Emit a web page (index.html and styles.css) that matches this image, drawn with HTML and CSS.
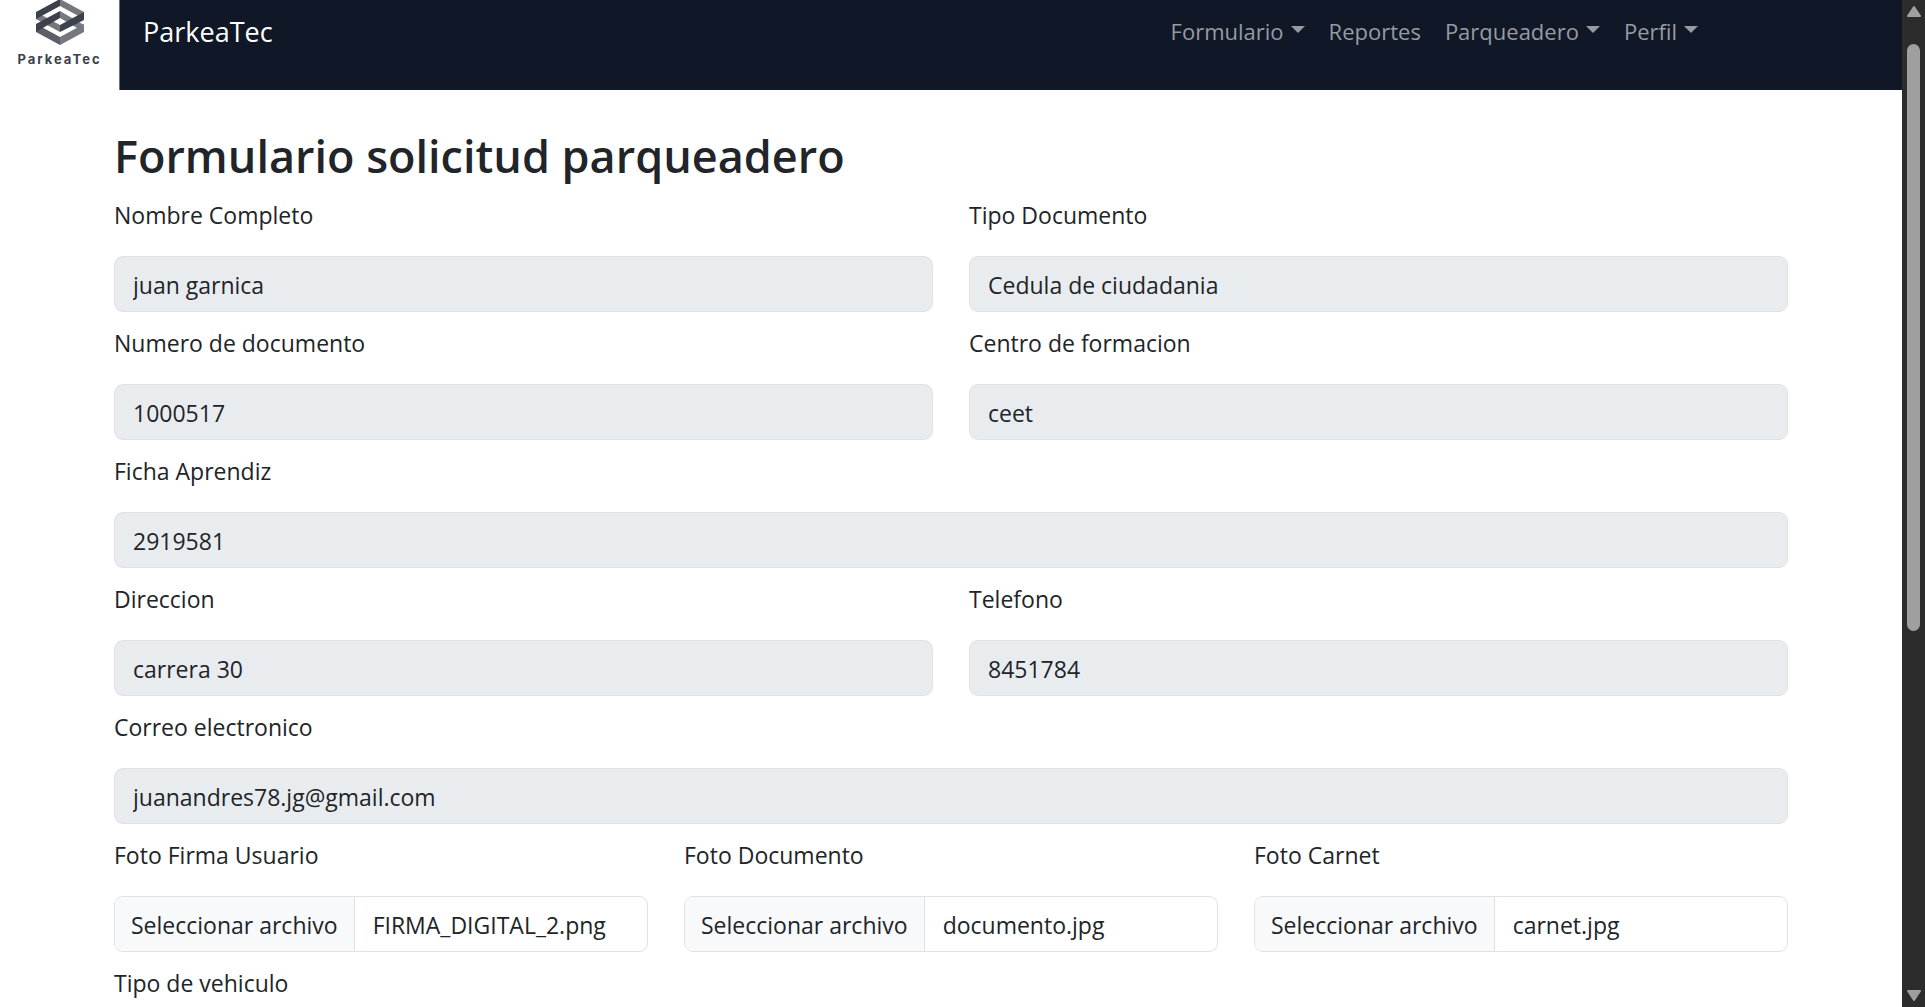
FILE: index.html
```html
<!DOCTYPE html>
<html lang="es">
<head>
<meta charset="utf-8">
<title>ParkeaTec</title>
<link rel="stylesheet" href="styles.css">
</head>
<body>
<div class="page">
  <header class="navbar">
    <a class="logo" href="#">
      <svg class="logo-mark" viewBox="0 0 48 46" aria-hidden="true">
        <path fill="#75787d" d="M24 -1 48 12V19L24 6Z"/>
        <path fill="#75787d" d="M0 12 24 25V32L0 19Z"/>
        <path fill="#75787d" d="M24 11 48 25V32L24 18Z"/>
        <path fill="#3d414b" d="M0 12 24 -1V6L0 19Z"/>
        <path fill="#5a5e66" d="M0 24 24 37V45L0 32Z"/>
        <path fill="#75787d" d="M48 24 24 37V45L48 32Z"/>
        <path fill="#3d414b" d="M0 24 24 11V18L0 32Z"/>
        <path fill="#3d414b" d="M48 12 24 25V32L48 20Z"/>
      </svg>
      <span class="logo-text">ParkeaTec</span>
    </a>
    <a class="brand" href="#">ParkeaTec</a>
    <nav class="menu">
      <button class="menu-item caret" type="button">Formulario</button>
      <a class="menu-item" href="#">Reportes</a>
      <button class="menu-item caret" type="button">Parqueadero</button>
      <button class="menu-item caret" type="button">Perfil</button>
    </nav>
  </header>
  <main class="content">
    <h1 class="title">Formulario solicitud parqueadero</h1>
    <form class="form">
      <div class="field half"><label for="nombre">Nombre Completo</label><input id="nombre" type="text" value="juan garnica" readonly></div>
      <div class="field half"><label for="tipo">Tipo Documento</label><input id="tipo" type="text" value="Cedula de ciudadania" readonly></div>
      <div class="field half"><label for="numero">Numero de documento</label><input id="numero" type="text" value="1000517" readonly></div>
      <div class="field half"><label for="centro">Centro de formacion</label><input id="centro" type="text" value="ceet" readonly></div>
      <div class="field"><label for="ficha">Ficha Aprendiz</label><input id="ficha" type="text" value="2919581" readonly></div>
      <div class="field half"><label for="direccion">Direccion</label><input id="direccion" type="text" value="carrera 30" readonly></div>
      <div class="field half"><label for="telefono">Telefono</label><input id="telefono" type="tel" value="8451784" readonly></div>
      <div class="field"><label for="correo">Correo electronico</label><input id="correo" type="email" value="juanandres78.jg@gmail.com" readonly></div>
      <div class="field third"><label for="firma">Foto Firma Usuario</label>
        <div class="file"><span class="file-button">Seleccionar archivo</span><span class="file-name">FIRMA_DIGITAL_2.png</span><input class="file-input" id="firma" type="file"></div></div>
      <div class="field third"><label for="documento">Foto Documento</label>
        <div class="file"><span class="file-button">Seleccionar archivo</span><span class="file-name">documento.jpg</span><input class="file-input" id="documento" type="file"></div></div>
      <div class="field third"><label for="carnet">Foto Carnet</label>
        <div class="file"><span class="file-button">Seleccionar archivo</span><span class="file-name">carnet.jpg</span><input class="file-input" id="carnet" type="file"></div></div>
      <div class="field"><span>Tipo de vehiculo</span></div>
    </form>
  </main>
</div>
<div class="scrollbar" aria-hidden="true">
  <svg class="arrow" viewBox="0 0 14 11"><path d="M7 1 13 10H1Z"/></svg>
  <div class="track"><div class="thumb"></div></div>
  <svg class="arrow" viewBox="0 0 14 11"><path d="M7 10 1 1H13Z"/></svg>
</div>
</body>
</html>
```
FILE: styles.css
```css
*, *::before, *::after { box-sizing: border-box; }

body {
  margin: 0;
  display: grid;
  grid-template-columns: minmax(0, 1fr) 23px;
  min-height: 100vh;
  background: #fff;
  color: #212529;
  font: 23px/36px "Open Sans", "Noto Sans", sans-serif;
}

a { text-decoration: none; }

.navbar {
  display: flex;
  align-items: flex-start;
  height: 90px;
  padding-right: 204px;
  background: #101726;
}

.logo {
  display: flex;
  flex-direction: column;
  align-items: center;
  align-self: stretch;
  width: 120px;
  background: #fff;
  border-right: 1px solid #6c7380;
  color: #3d414b;
}
.logo-mark { width: 48px; height: 46px; }
.logo-text { font: 700 13px/14px Inter, sans-serif; letter-spacing: 2px; margin-top: 6px; }

.brand { margin-left: 23px; padding-top: 9px; font-size: 27px; line-height: 45px; color: #fff; }

.menu { display: flex; gap: 24px; margin-left: auto; padding-top: 13px; font-size: 22px; }
.menu-item {
  display: flex;
  align-items: center;
  gap: 7px;
  padding: 0;
  border: 0;
  background: none;
  font: inherit;
  color: #979ba2;
}
.caret::after {
  content: "";
  border: 7px solid transparent;
  border-top-color: currentColor;
  border-bottom: 0;
  margin-bottom: 3px;
}

.content { padding: 37px 114px 0; }
.title { margin: 0 0 12px; font-size: 45px; line-height: 58px; font-weight: 600; }

.form { display: grid; grid-template-columns: repeat(6, minmax(0, 1fr)); gap: 13px 36px; }
.field { grid-column: span 6; display: flex; flex-direction: column; gap: 23px; }
.half { grid-column: span 3; }
.third { grid-column: span 2; }

.field > input {
  width: 100%;
  height: 56px;
  padding: 2px 18px 0;
  border: 1px solid #dee2e6;
  border-radius: 9px;
  background: #e9ecef;
  color: inherit;
  font: inherit;
}

.file {
  position: relative;
  display: flex;
  height: 56px;
  border: 1px solid #dee2e6;
  border-radius: 9px;
  overflow: hidden;
  line-height: 56px;
}
.file-button { padding: 0 16px; background: #f8f9fa; border-right: 1px solid #dee2e6; white-space: nowrap; }
.file-name { padding: 0 18px; white-space: nowrap; }
.file-input { position: absolute; inset: 0; width: 100%; opacity: 0; }

.scrollbar {
  position: sticky;
  top: 0;
  display: flex;
  flex-direction: column;
  align-items: center;
  height: 100vh;
  padding: 6px 0;
  background: #2c2c2c;
}
.arrow { width: 14px; height: 11px; fill: #9f9f9f; stroke: #9f9f9f; stroke-width: 2; stroke-linejoin: round; }
.track { flex: 1; padding: 27px 0 0; }
.thumb { width: 13px; height: 62%; border-radius: 7px; background: #9f9f9f; }
```
